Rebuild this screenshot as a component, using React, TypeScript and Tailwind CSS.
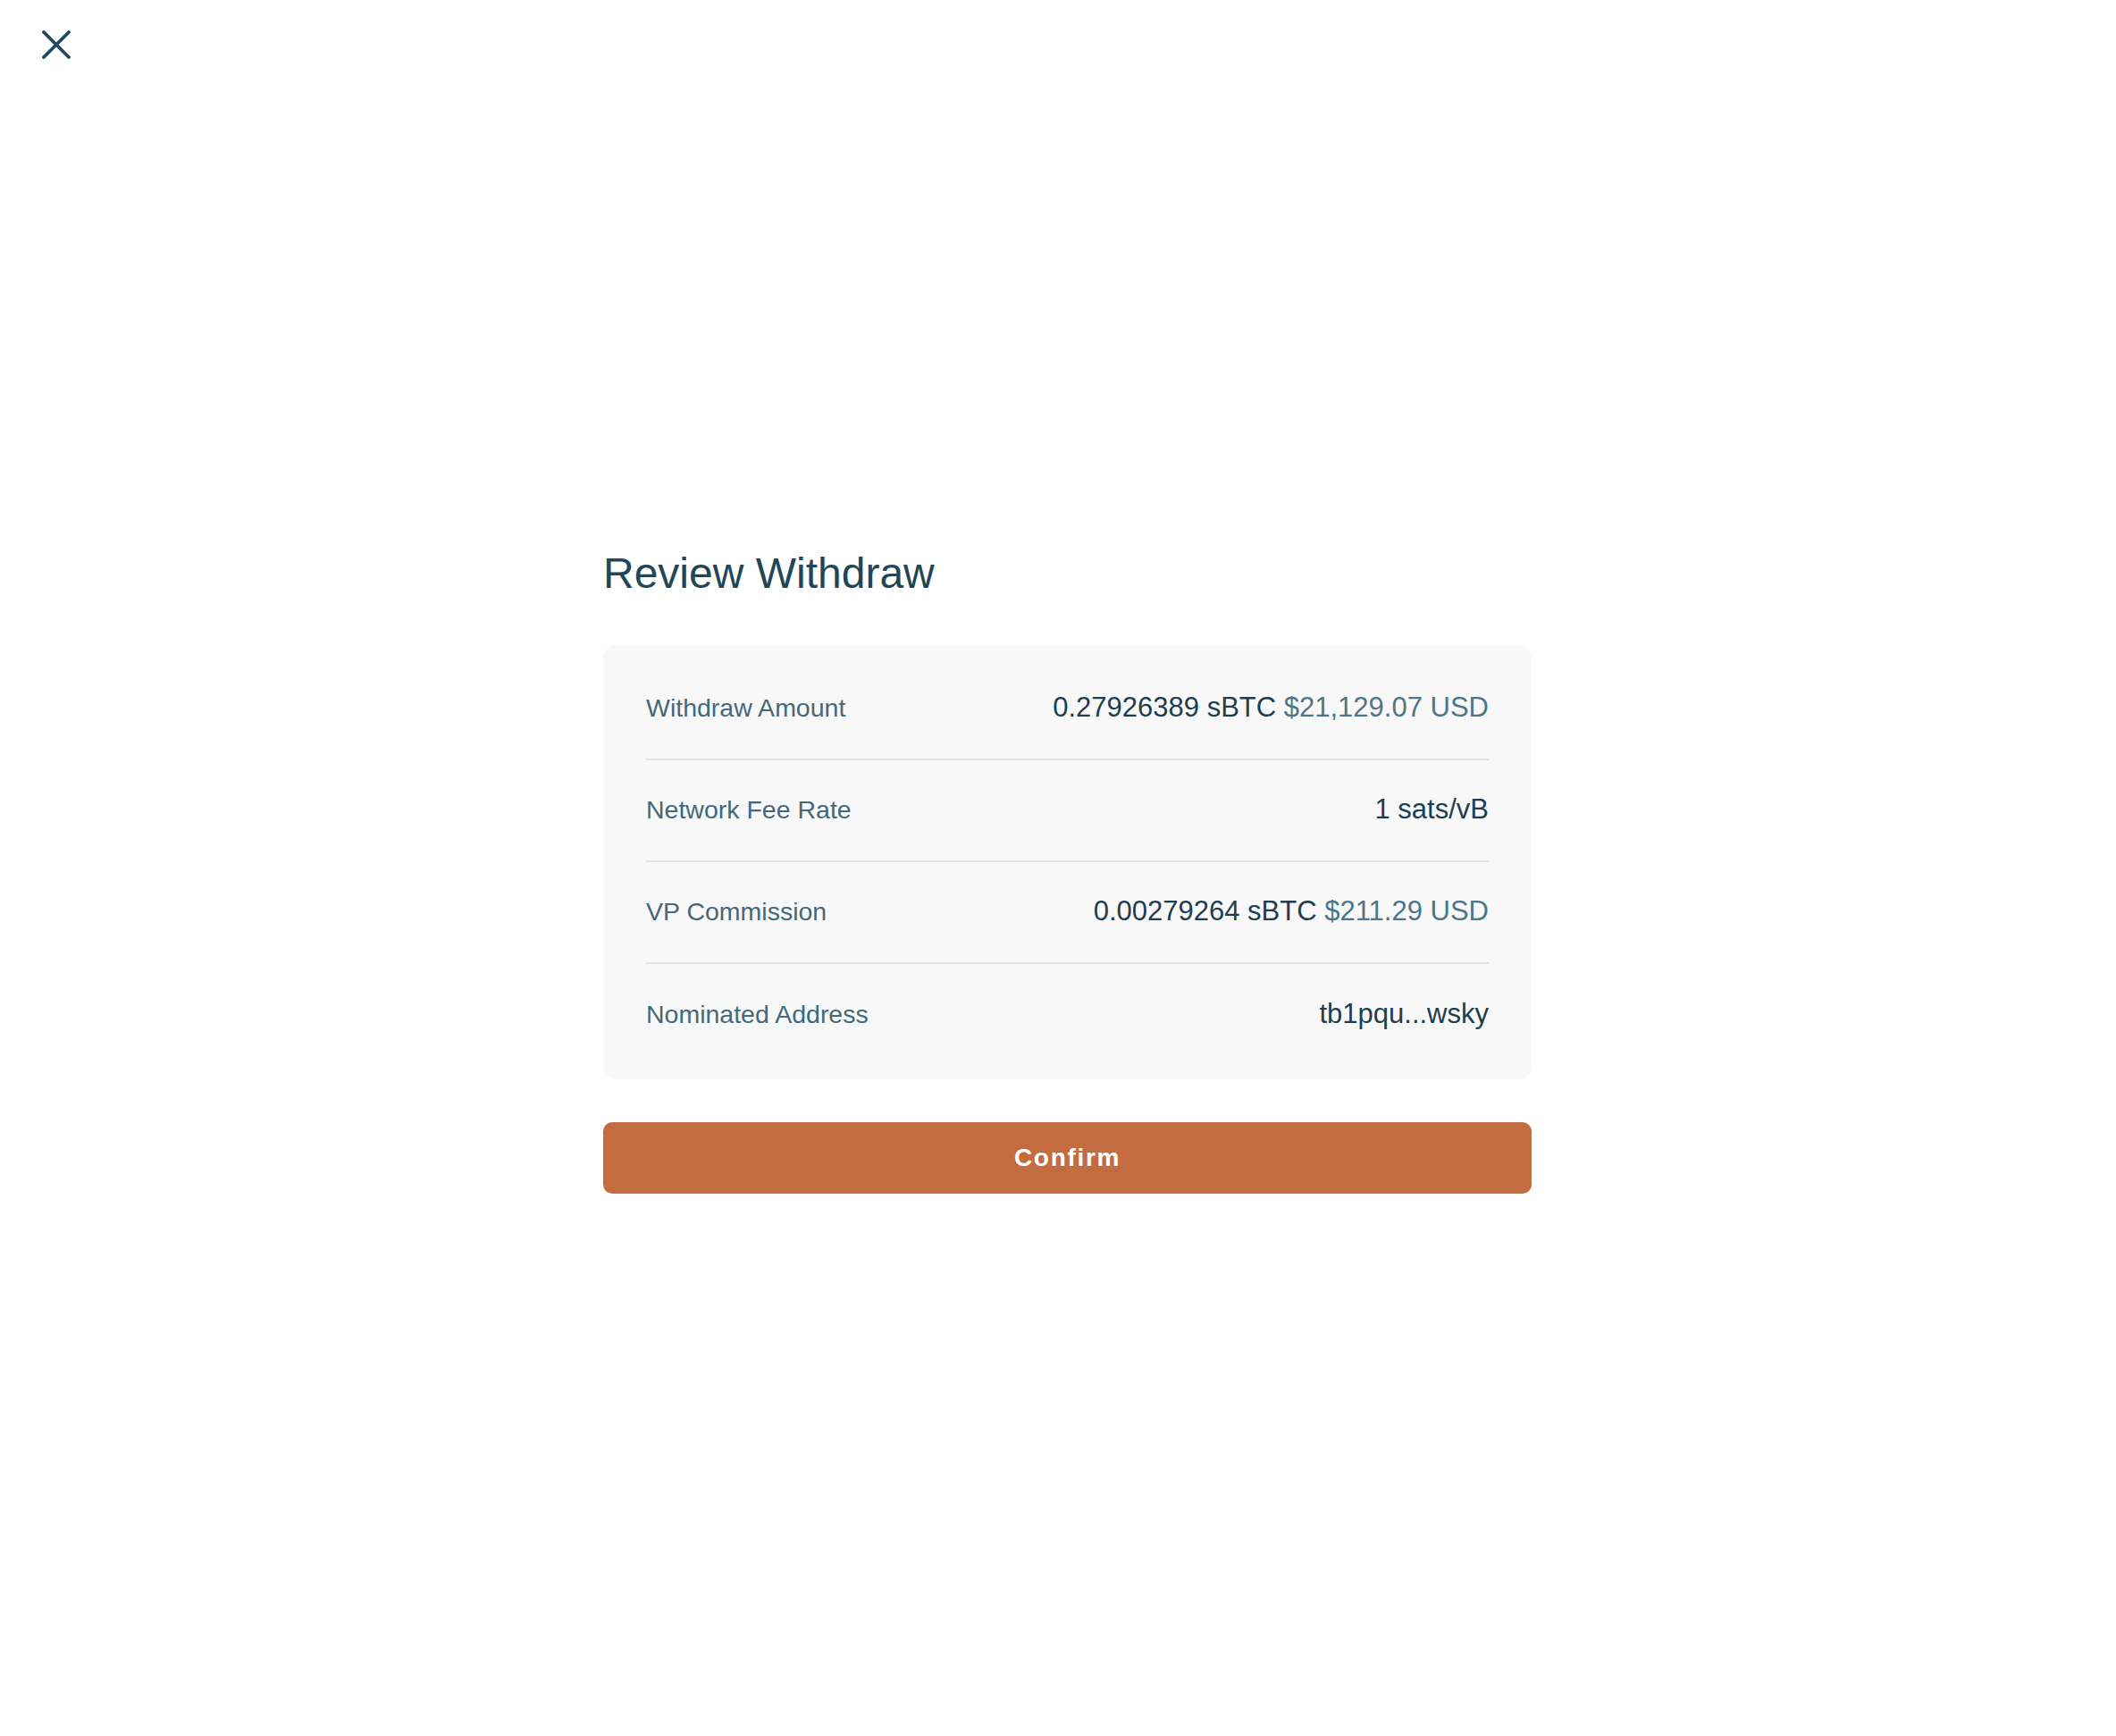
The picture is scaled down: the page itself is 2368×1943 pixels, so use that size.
import React from 'react';

interface ReviewRow {
  label: string;
  value: string;
  fiat?: string;
}

const rows: ReviewRow[] = [
  { label: 'Withdraw Amount', value: '0.27926389 sBTC', fiat: '$21,129.07 USD' },
  { label: 'Network Fee Rate', value: '1 sats/vB' },
  { label: 'VP Commission', value: '0.00279264 sBTC', fiat: '$211.29 USD' },
  { label: 'Nominated Address', value: 'tb1pqu...wsky' },
];

const CloseIcon: React.FC<{ className?: string }> = ({ className }) => (
  <svg viewBox="0 0 34 32" fill="none" className={className}>
    <path d="M3 2L31 30M31 2L3 30" stroke="currentColor" strokeWidth="3.8" strokeLinecap="round" />
  </svg>
);

const App: React.FC = () => {
  return (
    <div className="relative min-h-screen w-full bg-white font-['Liberation_Sans',Arial,sans-serif]">
      <button className="absolute left-[46px] top-[34px] text-[#1f4a5e]" aria-label="Close">
        <CloseIcon className="w-[34px] h-[32px]" />
      </button>

      <div className="flex h-[1943px] items-center justify-center pl-[21px] pt-[10px]">
        <div className="w-[1039px]">
          <h2 className="text-[48px] leading-[48px] text-[#1f4659] mb-[56px]">Review Withdraw</h2>

          <div className="bg-[#f8f8f8] rounded-[14px] px-12 py-[15px]">
            {rows.map((row, index) => (
              <div
                key={row.label}
                className={`flex items-center justify-between h-[114px] ${index < rows.length - 1 ? 'border-b-2 border-[#dfe2e5]' : ''}`}
              >
                <span className="text-[28.5px] text-[#43697b]">{row.label}</span>
                <span className="text-[31px] text-[#1e3e50]">
                  {row.value}
                  {row.fiat && <span className="text-[#4d7688]"> {row.fiat}</span>}
                </span>
              </div>
            ))}
          </div>

          <button className="mt-12 w-full h-[80px] rounded-[10px] bg-[#c26c3f] text-white text-[28px] font-semibold tracking-[0.06em]">
            Confirm
          </button>
        </div>
      </div>
    </div>
  );
};

export default App;
